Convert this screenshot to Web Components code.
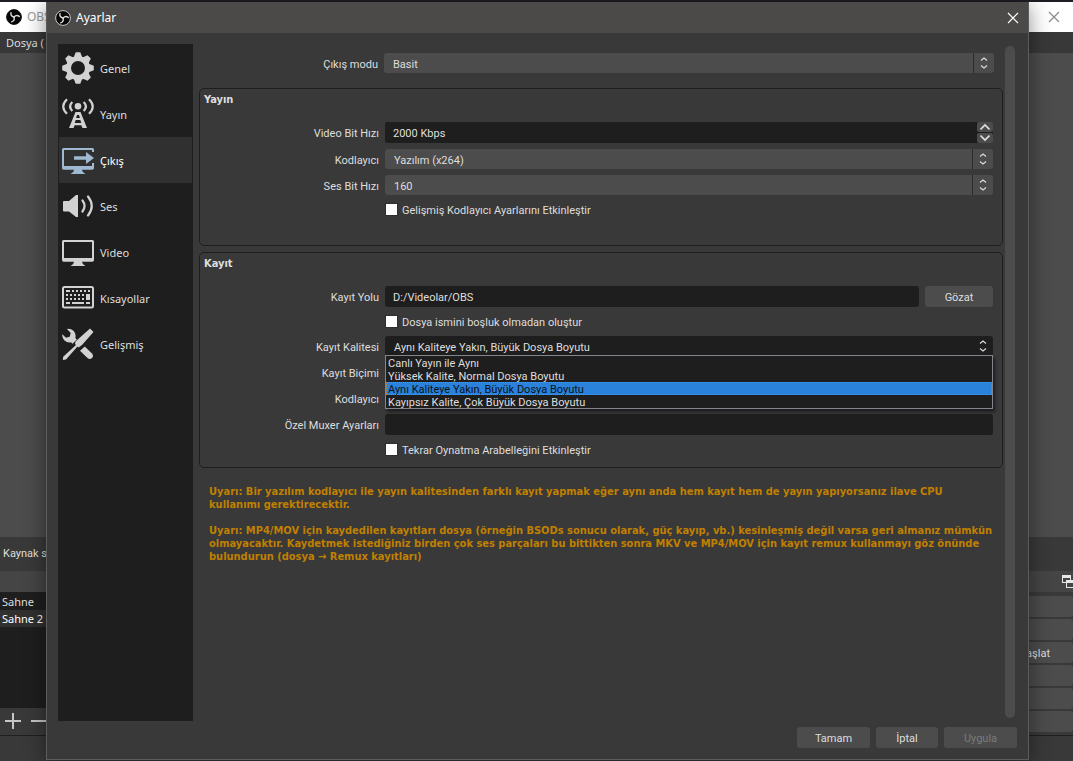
<!DOCTYPE html>
<html lang="tr">
<head>
<meta charset="utf-8">
<meta name="viewport" content="width=device-width, initial-scale=1">
<title>Ayarlar</title>
<style>
  html, body { margin: 0; height: 100%; }
  body {
    --ui: Roboto, "Liberation Sans", sans-serif;
    --system: "Noto Sans", "Open Sans", sans-serif;
    --strong: "DejaVu Sans Condensed", "DejaVu Sans", sans-serif;
    --panel: #393939;
    --field: #1f1e1f;
    --raised: #4c4c4c;
    --text: #dedede;
    font: 11px/13px var(--ui);
    color: var(--text);
    background: #1d1d23;
    overflow: hidden;
  }
</style>
</head>
<body>
<obs-desktop>
  <main-window slot="back"></main-window>
  <settings-dialog>
    <settings-nav slot="nav">
      <nav-item icon="gear">Genel</nav-item>
      <nav-item icon="antenna">Yayın</nav-item>
      <nav-item icon="output" selected>Çıkış</nav-item>
      <nav-item icon="speaker">Ses</nav-item>
      <nav-item icon="monitor">Video</nav-item>
      <nav-item icon="keyboard">Kısayollar</nav-item>
      <nav-item icon="tools">Gelişmiş</nav-item>
    </settings-nav>

    <combo-field class="mode" label="Çıkış modu" value="Basit"></combo-field>

    <group-box heading="Yayın" class="stream">
      <spin-field label="Video Bit Hızı" value="2000 Kbps"></spin-field>
      <combo-field label="Kodlayıcı" value="Yazılım (x264)"></combo-field>
      <combo-field label="Ses Bit Hızı" value="160"></combo-field>
      <check-field label="Gelişmiş Kodlayıcı Ayarlarını Etkinleştir"></check-field>
    </group-box>

    <group-box heading="Kayıt">
      <text-field label="Kayıt Yolu" value="D:/Videolar/OBS"><push-button class="browse">Gözat</push-button></text-field>
      <check-field label="Dosya ismini boşluk olmadan oluştur"></check-field>
      <combo-field open label="Kayıt Kalitesi" value="Aynı Kaliteye Yakın, Büyük Dosya Boyutu"
        options="Canlı Yayın ile Aynı|Yüksek Kalite, Normal Dosya Boyutu|Aynı Kaliteye Yakın, Büyük Dosya Boyutu|Kayıpsız Kalite, Çok Büyük Dosya Boyutu"></combo-field>
      <combo-field label="Kayıt Biçimi"></combo-field>
      <combo-field label="Kodlayıcı"></combo-field>
      <text-field label="Özel Muxer Ayarları" value=""></text-field>
      <check-field label="Tekrar Oynatma Arabelleğini Etkinleştir"></check-field>
    </group-box>

    <warning-text>
      <p>Uyarı: Bir yazılım kodlayıcı ile yayın kalitesinden farklı kayıt yapmak eğer aynı anda hem kayıt hem de yayın yapıyorsanız ilave CPU kullanımı gerektirecektir.</p>
      <p>Uyarı: MP4/MOV için kaydedilen kayıtları dosya (örneğin BSODs sonucu olarak, güç kayıp, vb.) kesinleşmiş değil varsa geri almanız mümkün olmayacaktır. Kaydetmek istediğiniz birden çok ses parçaları bu bittikten sonra MKV ve MP4/MOV için kayıt remux kullanmayı göz önünde bulundurun (dosya → Remux kayıtları)</p>
    </warning-text>

    <push-button slot="actions" class="wide">Tamam</push-button>
    <push-button slot="actions">İptal</push-button>
    <push-button slot="actions" class="wide" disabled>Uygula</push-button>
  </settings-dialog>
</obs-desktop>

<script>
const shadow = (el, html) => {
  const t = document.createElement("template");
  t.innerHTML = html;
  el.attachShadow({ mode: "open" }).append(t.content.cloneNode(true));
};

/* ---------- icons ---------- */
const tooth = a => `<path d="M11.5 6 13.7.2h4.6L20.5 6z" transform="rotate(${a} 16 16)"/>`;
const keys = [];
for (const x of [10, 14, 18, 22, 26]) keys.push(`<path d="M${x} 8h2v2h-2z"/>`);
for (const y of [12, 16]) for (const x of [4, 8, 12, 16, 20]) keys.push(`<path d="M${x} ${y}h2v2h-2z"/>`);
const screen = `<path d="M1.5 4h29q1.5 0 1.5 1.5V24q0 1.7-1.7 1.7H20l.8 2.3 2.7 2H8.5l2.7-2 .8-2.3H1.7Q0 25.7 0 24V5.5Q0 4 1.5 4zM2 6v16h28V6z" fill-rule="evenodd"/>`;
const blade = a => `<path d="M8 8C5.8 7.4 4.5 5.6 5 3.6" fill="none" stroke="#dcdcdc" stroke-width="1.4" stroke-linecap="round" transform="rotate(${a} 8 8)"/>`;
const ICONS = {
  gear: [32, [0, 45, 90, 135, 180, 225, 270, 315].map(tooth).join("") +
    `<circle cx="16" cy="16" r="9.5" fill="none" stroke="currentColor" stroke-width="5"/>`],
  antenna: [32, `<circle cx="16" cy="8.3" r="3.3"/>
    <g fill="none" stroke="currentColor" stroke-width="2.2"><path d="M10.3 4Q6 8.5 10.3 13M5 1.2Q-2.5 8.5 5 15.8M21.7 4Q26 8.5 21.7 13M27 1.2Q34.5 8.5 27 15.8"/></g>
    <path d="M13.5 14h5l6.5 16h-4.5l-1.2-2.8h-6.6L11.5 30H7zM15 17l-.9 3h3.8l-.9-3zM13.7 22l-1 3h6.6l-1-3z" fill-rule="evenodd"/>`],
  output: [32, `<path d="M1.5 4h29Q32 4 32 5.5V8h-2V6H2v16h28v-3h2v5q0 1.7-1.7 1.7H20l.8 2.3 2.7 2H8.5l2.7-2 .8-2.3H1.7Q0 25.7 0 24V5.5Q0 4 1.5 4z"/>
    <path d="M12 12.2h12V8l8 6-8 6v-4.2H12z"/>`],
  speaker: [32, `<path d="M2 11h5l7-6h2v22h-2l-7-5.5H2q-1 0-1-1V12q0-1 1-1z"/>
    <g fill="none" stroke="currentColor" stroke-width="2.2" stroke-linecap="round"><path d="M20.5 10.5Q24.6 16 20.5 21.5M26 6.5Q33.5 16 26 25.5"/></g>`],
  monitor: [32, screen],
  keyboard: [32, `<rect x="1" y="5" width="30" height="20.5" rx="1.5" fill="none" stroke="currentColor" stroke-width="2"/>
    <path d="M4 8h4v2H4zM24 12h4v6h-4zM4 20h4v2H4zM10 20h12v2H10zM24 20h4v2h-4z"/>` + keys.join("")],
  tools: [32, `<path d="M28 .5 31.5 4 20 17l-3.5 2.5-1-1L4 31.5.8 32l.4-3.3L14 17l-1-1 .5-2.5z"/>
    <path d="M5 .9Q8.5.2 11.5 2.8 14.5 6 13.3 10l1.5 1.5-4.3 4.3L9 14.2Q5.5 15 2.5 12.5-.3 9.5.3 6.2L4 9.8l3.7-1L8.7 5z"/>
    <path d="M18 22.8 22.8 18.5 30 25.5Q32 28 30 30T25.5 30z"/>`],
  logo: [16, `<circle cx="8" cy="8" r="7.4" fill="#050505" stroke="var(--ring, #c8c8c8)"/>` + [0, 120, 240].map(blade).join("")],
  close: [16, `<path d="m3 3 10 10M13 3 3 13" fill="none" stroke="currentColor" stroke-width="1.2"/>`],
  up: [10, `<path d="m.5 7.5 4.5-4.5 4.5 4.5" fill="none" stroke="currentColor" stroke-width="1.7"/>`],
  down: [10, `<path d="m.5 2.5 4.5 4.5 4.5-4.5" fill="none" stroke="currentColor" stroke-width="1.7"/>`],
  updown: [12, `<path d="M3 3.5 6 1l3 2.5M3 8.5 6 11l3-2.5" fill="none" stroke="currentColor" stroke-width="1.1"/>`],
  plus: [16, `<path d="M0 7h16v2H0zM7 0h2v16H7z"/>`],
  minus: [16, `<path d="M0 7h16v2H0z"/>`],
  float: [16, `<path d="M1 1h9v5h6v8H5V9H1zM2 4v4h3V6h4V4zM6 9v4h9V9z" fill-rule="evenodd"/>`]
};
customElements.define("app-icon", class extends HTMLElement {
  connectedCallback() {
    if (this.shadowRoot) return;
    const [box, body] = ICONS[this.getAttribute("name")];
    shadow(this, `<style>:host{display:block;flex:none;width:var(--size,16px);height:var(--size,16px)}svg{display:block;width:100%;height:100%}</style>
      <svg viewBox="0 0 ${box} ${box}" fill="currentColor" aria-hidden="true">${body}</svg>`);
  }
});

/* ---------- shared controls ---------- */
customElements.define("push-button", class extends HTMLElement {
  connectedCallback() {
    shadow(this, `<style>
      :host{display:block;width:62px}
      :host(.wide){width:73px}
      :host(.browse){width:68px}
      button{width:100%;height:21px;padding:2px 0 0;border:0;border-radius:3px;background:var(--raised);color:inherit;font:inherit}
      button:disabled{color:#7b7b7b}
    </style><button type="button"${this.hasAttribute("disabled") ? " disabled" : ""}><slot></slot></button>`);
  }
});

const FIELD = `
  :host{display:grid;grid-template-columns:179px minmax(0,1fr);column-gap:6px;align-items:center;padding-right:9px}
  label{padding-top:2px;text-align:right;white-space:nowrap}
  input,select,button{font:inherit;color:inherit;margin:0;outline:0}
`;
const TEXT = `
  .row{display:flex;gap:6px}
  input{flex:1;min-width:0;height:21px;box-sizing:border-box;border:0;border-radius:3px;padding:2px 8px 0;background:var(--field)}
`;

customElements.define("text-field", class extends HTMLElement {
  connectedCallback() {
    shadow(this, `<style>${FIELD}${TEXT}</style>
      <label for="c">${this.getAttribute("label")}</label>
      <div class="row"><input id="c" type="text" value="${this.getAttribute("value")}"><slot></slot></div>`);
  }
});

customElements.define("spin-field", class extends HTMLElement {
  connectedCallback() {
    shadow(this, `<style>${FIELD}${TEXT}
      .row{gap:0;background:var(--field);border-radius:3px}
      .steps{display:grid;grid-template-rows:10px 10px;gap:1px;width:16px}
      button{display:grid;place-items:center;border:0;padding:0;border-radius:2px;background:var(--raised);--size:10px}
    </style>
      <label for="c">${this.getAttribute("label")}</label>
      <div class="row"><input id="c" type="text" value="${this.getAttribute("value")}">
        <div class="steps"><button type="button" aria-label="Artır"><app-icon name="up"></app-icon></button><button type="button" aria-label="Azalt"><app-icon name="down"></app-icon></button></div>
      </div>`);
  }
});

customElements.define("combo-field", class extends HTMLElement {
  connectedCallback() {
    const value = this.getAttribute("value");
    const open = this.hasAttribute("open");
    const list = open ? this.getAttribute("options").split("|") : [];
    shadow(this, `<style>${FIELD}
      .box{position:relative;display:grid;grid-template-columns:minmax(0,1fr) 21px;height:20px;border-radius:3px;background:var(--raised)}
      select{grid-area:1/1/2/3;width:100%;height:20px;appearance:none;border:0;padding:2px 9px 0;background:transparent}
      .arrow{grid-area:1/2;display:grid;place-items:center;border-left:1px solid #2c2c2c;pointer-events:none;--size:12px}
      :host([open]) .box{background:var(--field)}
      :host([open]) .arrow{border-color:transparent}
      ul{position:absolute;z-index:2;left:0;right:0;top:19px;margin:0;padding:0;list-style:none;border:1px solid #83868c;background:var(--field);box-shadow:2px 3px 3px rgba(0,0,0,.5)}
      li{height:13px;box-sizing:border-box;padding:1px 2px 0;line-height:13px}
      li[aria-selected=true]{background:#2a82da;color:#0b1117;outline:1px dotted #d5771e;outline-offset:-1px}
    </style>
      <label for="c">${this.getAttribute("label")}</label>
      <div class="box"><select id="c">${value ? `<option>${value}</option>` : ""}</select>
        <div class="arrow"><app-icon name="updown"></app-icon></div>
        ${open ? `<ul role="listbox">${list.map(o => `<li role="option" aria-selected="${o === value}">${o}</li>`).join("")}</ul>` : ""}
      </div>`);
  }
});

customElements.define("check-field", class extends HTMLElement {
  connectedCallback() {
    shadow(this, `<style>${FIELD}
      .row{grid-column:2;display:flex;align-items:center;gap:4px;height:17px}
      input{appearance:none;width:13px;height:13px;border:1px solid #2e2e2e;background:#fff}
    </style><div class="row"><input id="c" type="checkbox"><label for="c">${this.getAttribute("label")}</label></div>`);
  }
});

customElements.define("group-box", class extends HTMLElement {
  connectedCallback() {
    shadow(this, `<style>
      :host{display:block}
      section{display:flex;flex-direction:column;gap:6px;border:1px solid #1f1e1f;border-radius:5px;padding:4px 0 9px}
      :host(.stream) section{padding-bottom:27px}
      h2{margin:0 4px 10px;font:bold 11px/13px var(--strong)}
    </style><section><h2>${this.getAttribute("heading")}</h2><slot></slot></section>`);
  }
});

customElements.define("warning-text", class extends HTMLElement {
  connectedCallback() {
    shadow(this, `<style>
      :host{display:block;font:bold 11px/13px var(--strong);color:#c08000}
      ::slotted(p){margin:0 0 13px}
    </style><slot></slot>`);
  }
});

/* ---------- navigation ---------- */
customElements.define("nav-item", class extends HTMLElement {
  connectedCallback() {
    const sel = this.hasAttribute("selected");
    shadow(this, `<style>
      :host{display:block;--size:32px;color:#d2d2d2}
      button{display:flex;align-items:center;gap:6px;width:100%;height:46px;padding:0 3px;border:0;background:none;color:inherit;font:11px/16px var(--system);text-align:left}
      span{padding-top:2px;color:var(--text)}
      :host([selected]) button{background:#303030}
      :host([selected]) span{color:#fff}
      :host([selected]) app-icon{color:#9fb9d3}
    </style><button type="button" role="tab" aria-selected="${sel}"><app-icon name="${this.getAttribute("icon")}"></app-icon><span><slot></slot></span></button>`);
  }
});
customElements.define("settings-nav", class extends HTMLElement {
  connectedCallback() {
    shadow(this, `<style>:host{display:block;width:133px;padding:1px;background:var(--field)}</style><nav role="tablist"><slot></slot></nav>`);
  }
});

/* ---------- windows ---------- */
customElements.define("settings-dialog", class extends HTMLElement {
  connectedCallback() {
    shadow(this, `<style>
      :host{position:absolute;inset:2px 44px 1px 46px;display:flex;flex-direction:column;box-sizing:border-box;border:1px solid #5c5c5b;border-top-color:#4c4a48;background:var(--panel);box-shadow:0 4px 20px rgba(0,0,0,.45)}
      header{display:flex;align-items:center;gap:5px;height:30px;padding:0 7px 0 8px;background:#4c4a48}
      h1{flex:1;margin:0;font:12px/16px var(--system);color:#fff}
      header button{display:grid;place-items:center;width:16px;height:16px;padding:0;border:0;background:none;color:#fff}
      .body{flex:1;min-height:0;display:flex;padding:11px 13px 0 11px}
      .page{flex:1;min-width:0;padding:9px 0 0 6px;display:flex;flex-direction:column;gap:6px}
      ::slotted(.mode){margin-bottom:9px}
      ::slotted(warning-text){margin:11px 8px 0 10px}
      .scroll{width:10px;margin:2px 0 3px 2px;border-radius:5px;background:var(--raised)}
      footer{display:flex;justify-content:flex-end;gap:6px;padding:6px 11px 11px}
    </style>
    <header><app-icon name="logo"></app-icon><h1>Ayarlar</h1><button type="button" aria-label="Kapat"><app-icon name="close"></app-icon></button></header>
    <div class="body"><slot name="nav"></slot><div class="page"><slot></slot></div><div class="scroll"></div></div>
    <footer><slot name="actions"></slot></footer>`);
    this.setAttribute("role", "dialog");
  }
});

customElements.define("main-window", class extends HTMLElement {
  connectedCallback() {
    shadow(this, `<style>
      :host{display:flex;flex-direction:column;height:100%;box-sizing:border-box;padding-top:2px;font:12px/16px var(--system)}
      header{display:flex;align-items:center;gap:5px;height:30px;padding:0 11px 0 6px;background:#fff;color:#999;--ring:#111}
      header span{flex:1}
      header button{border:0;padding:0;background:none;color:#8a8a8a}
      .menu{height:21px;padding:0 6px;background:#383838;line-height:21px;font-size:11px}
      .preview{flex:1;background:var(--raised)}
      .context{height:34px;padding:0 3px;background:var(--panel);font:11px/34px var(--ui)}
      .titles{display:flex;align-items:center;justify-content:flex-end;height:21px;background:#454545}
      .titles app-icon{margin-right:-4px;color:#e8e8e8}
      .docks{display:flex;justify-content:space-between;height:143px;background:var(--panel)}
      .scenes{width:150px}
      ul{height:116px;margin:0;padding:1px 0 0;box-sizing:border-box;list-style:none;background:var(--field)}
      li{height:17px;padding:0 2px;line-height:17px;font-size:11px}
      li.on{background:#303030;color:#fff}
      .tools{display:flex;align-items:center;gap:10px;height:26px;padding:0 5px;color:#c6c6c6}
      .tools button{border:0;padding:0;background:none;color:inherit}
      .controls{display:grid;grid-auto-rows:21px;gap:2px;width:150px;padding-top:4px;align-content:start}
      .controls button{border:0;border-radius:3px;padding:2px 23px 0 0;background:var(--raised);color:inherit;font:11px/13px var(--ui);text-align:right}
      .status{height:25px;border-top:1px solid #202020;background:var(--panel)}
    </style>
    <header><app-icon name="logo"></app-icon><span>OBS</span><button type="button" aria-label="Kapat"><app-icon name="close"></app-icon></button></header>
    <div class="menu">Dosya (</div>
    <div class="preview"></div>
    <div class="context">Kaynak s</div>
    <div class="titles"><app-icon name="float"></app-icon></div>
    <div class="docks">
      <div class="scenes"><ul><li>Sahne</li><li class="on">Sahne 2</li></ul>
        <div class="tools"><button type="button" aria-label="Ekle"><app-icon name="plus"></app-icon></button><button type="button" aria-label="Sil"><app-icon name="minus"></app-icon></button></div></div>
      <div class="controls"><button type="button"></button><button type="button"></button><button type="button">aşlat</button><button type="button"></button><button type="button"></button><button type="button"></button></div>
    </div>
    <div class="status"></div>`);
  }
});

customElements.define("obs-desktop", class extends HTMLElement {
  connectedCallback() {
    shadow(this, `<style>:host{display:block;position:relative;height:100vh;overflow:hidden}</style><slot name="back"></slot><slot></slot>`);
  }
});
</script>
</body>
</html>
